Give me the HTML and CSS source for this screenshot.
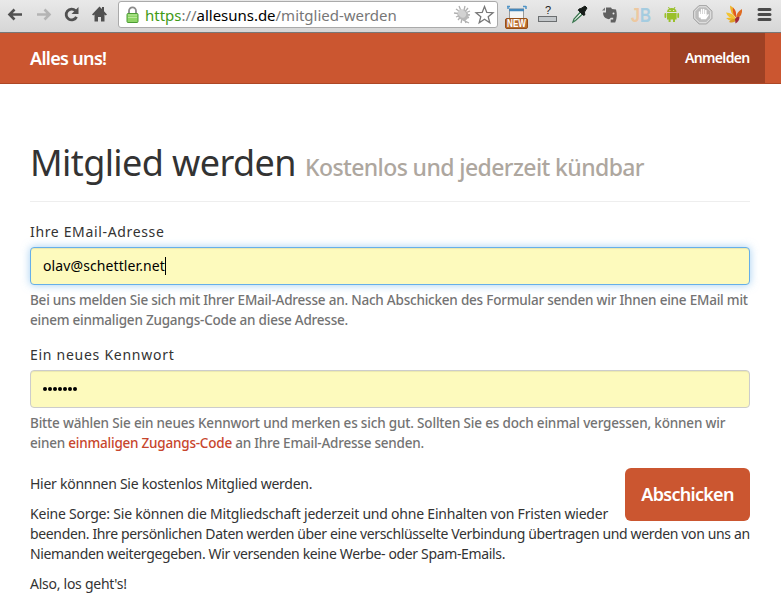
FILE: index.html
```html
<!DOCTYPE html>
<html lang="de">
<head>
<meta charset="utf-8">
<title>Mitglied werden</title>
<link rel="stylesheet" href="styles.css">
</head>
<body>
<div class="toolbar">
  <svg class="nav-icons" width="118" height="32" viewBox="0 0 118 32">
    <path d="M22 14.500H10M14.500 9.500l-5 5 5 5" fill="none" stroke="#505050" stroke-width="2.600"/>
    <path d="M37 14.500h12M44.500 9.500l5 5-5 5" fill="none" stroke="#b4b4b4" stroke-width="2.600"/>
    <path d="M75.500 10.800a5.400 5.400 0 1 0 1 6" fill="none" stroke="#505050" stroke-width="2.800"/>
    <path d="M78.500 7v7h-7z" fill="#505050"/>
    <path d="M99.500 6.500l-7.500 8 1.200 1 1.300-1v7h3.500v-4.500h3v4.500h3.500v-7l1.300 1 1.200-1-3-3.200V7h-2v2z" fill="#505050"/>
  </svg>
  <div class="address">
    <svg width="13" height="18" viewBox="0 0 13 18">
      <path d="M3 8V4.800a3.500 3.500 0 0 1 7 0V8" fill="none" stroke="#8b8b8b" stroke-width="1.800"/>
      <rect x="1" y="7.500" width="11" height="9" rx="1" fill="#8fd566" stroke="#4b9c34"/>
      <path d="M2 9h9M2 11.500h9" stroke="#b9ea9b"/>
    </svg>
    <span class="url"><span class="scheme">https</span>://<span class="host">allesuns.de</span>/mitglied-werden</span>
    <svg class="address-actions" width="42" height="22" viewBox="0 0 42 22">
      <g fill="none" stroke="#b0b0b0" stroke-width="1.300"><path d="M3 5l13 9M6 2l7 17M12 2L8 19M17 7L3 13M1 9l16 2M15 4L5 16M10 16l6 3"/></g>
      <ellipse cx="10" cy="11" rx="6" ry="5" fill="#b8b8b8" transform="rotate(40 10 11)"/>
      <ellipse cx="9" cy="9.500" rx="4.500" ry="3.500" fill="#d2d2d2" transform="rotate(40 9 9.500)"/>
      <path d="M31.500 2.500l2.300 5.900 6.200.3-4.800 4 1.600 6.100-5.300-3.500-5.300 3.500 1.600-6.100-4.800-4 6.200-.3z" fill="#fff" stroke="#777" stroke-width="1.300"/>
    </svg>
  </div>
  <svg class="extensions" width="283" height="32" viewBox="0 0 283 32">
    <path d="M10 6v3M9 6.500h3M28 6.500h-3M28 6v3" fill="none" stroke="#4f94c6" stroke-width="1.500"/>
    <rect x="11.500" y="9" width="14" height="13" fill="#f5f5f5" stroke="#999"/>
    <path d="M11 10h15" stroke="#4488bd" stroke-width="2.500"/>
    <rect x="7.500" y="18.500" width="22" height="10" rx="1.500" fill="#b96b2c" stroke="#965019"/>
    <text class="badge-new" x="18.500" y="27.300" text-anchor="middle" textLength="19" lengthAdjust="spacingAndGlyphs">NEW</text>
    <text class="question" x="50" y="13.500" text-anchor="middle">?</text>
    <rect x="40.500" y="16.500" width="18" height="5" fill="#c3c7ca" stroke="#6b6e70"/>
    <path d="M75 22l1-3 6.500-7 2 2-7 6.500z" fill="#fff" stroke="#39764e" stroke-width="1.300"/>
    <path d="M81 9l2-.5 4-2.500 2 2-2.500 4 .3 3-1.500.3-5-5z" fill="#171c19" stroke="#171c19"/>
    <path d="M108 7.500h5l1 1.500 4 .4q2 7-.8 13h-4.500v-2.800h2.500v-1.800h-2.500q-1 2-3.500 1-4-1-4.200-6.300h3z" fill="#606060"/>
    <path d="M107 7.500v3h-3z" fill="#747474"/>
    <circle cx="115.500" cy="13.500" r="1" fill="#eee"/>
    <text class="jb" x="133" y="22" textLength="9" lengthAdjust="spacingAndGlyphs" fill="#edc8a0">J</text>
    <text class="jb" x="142" y="22" textLength="11" lengthAdjust="spacingAndGlyphs" fill="#a5cce0">B</text>
    <g fill="#9ac02b">
      <path d="M169 12a4.800 4 0 0 1 9.600 0z"/>
      <path d="M169 13h9.600v6.500h-1.600v2.500h-2v-2.500h-2.400v2.500h-2v-2.500H169z"/>
      <rect x="166.500" y="13" width="1.800" height="5" rx=".9"/><rect x="179.300" y="13" width="1.800" height="5" rx=".9"/>
      <path d="M170.500 7l1 2M177 7l-1 2" stroke="#9ac02b"/>
    </g>
    <circle cx="172" cy="10.500" r=".6" fill="#fff"/><circle cx="175.700" cy="10.500" r=".6" fill="#fff"/>
    <path d="M201 5.500h7.500l5.500 5.500v7.500l-5.500 5.500H201l-5.500-5.500V11z" fill="#bdbdbd" stroke="#aaa"/>
    <path d="M201.400 6.800h6.700l4.600 4.600v6.700l-4.600 4.600h-6.700l-4.600-4.600v-6.700z" fill="none" stroke="#e5e5e5"/>
    <path d="M201.500 17v-5M203.600 14V9.500M205.700 14V9.500M207.800 15v-4.500" stroke="#fff" stroke-width="1.500" stroke-linecap="round"/>
    <path d="M200.800 14h7.700v2l1.500-2 1 .8-3 4.500h-5z" fill="#fff"/>
    <path d="M232 5.500q7 3 6 12-6-4-6-12z" fill="#eeb32c"/>
    <path d="M235 7.500q4 4 3 10-4-4-3-10z" fill="#e25720"/>
    <path d="M244 9q1 7-5.500 9.500-1-6 5.500-9.500z" fill="#df6b22"/>
    <path d="M228 12.500q7 0 10 6.500-8 0-10-6.500z" fill="#f2c433"/>
    <path d="M228 18q5-1 10 1-4 4.500-10-1z" fill="#efb928"/>
    <path d="M231 22q3-4 8-3-3 5-8 3z" fill="#dc9d24"/>
    <path d="M237 19q2-3 4.500-2 0 4-4 6.500z" fill="#a42a38"/>
    <path d="M261 9.500h11M261 14.500h11M261 19.500h11" stroke="#4b4b4b" stroke-width="3" stroke-linecap="round"/>
  </svg>
</div>
<header class="navbar">
  <a class="brand">Alles uns!</a>
  <a class="login">Anmelden</a>
</header>
<main>
  <h1><span class="title">Mitglied werden</span><small>Kostenlos und jederzeit kündbar</small></h1>
  <form>
    <label class="label-email">Ihre EMail-Adresse</label>
    <div class="field focused"><span class="value">olav@schettler.net</span><span class="caret"></span></div>
    <p class="help"><span class="h1a">Bei uns melden Sie sich mit Ihrer EMail-Adresse an. Nach Abschicken des Formular senden wir Ihnen eine EMail mit</span><br><span class="h1b">einem einmaligen Zugangs-Code an diese Adresse.</span></p>
    <label class="label-password">Ein neues Kennwort</label>
    <div class="field"><span class="dots"><i></i><i></i><i></i><i></i><i></i><i></i><i></i></span></div>
    <p class="help"><span class="h2a">Bitte wählen Sie ein neues Kennwort und merken es sich gut. Sollten Sie es doch einmal vergessen, können wir</span><br><span class="h2b">einen <a>einmaligen Zugangs-Code</a> an Ihre Email-Adresse senden.</span></p>
    <div class="info">
      <a class="submit">Abschicken</a>
      <p class="p1">Hier könnnen Sie kostenlos Mitglied werden.</p>
      <p><span class="p2a">Keine Sorge: Sie können die Mitgliedschaft jederzeit und ohne Einhalten von Fristen wieder</span><br><span class="p2b">beenden. Ihre persönlichen Daten werden über eine verschlüsselte Verbindung übertragen und werden von uns an</span><br><span class="p2c">Niemanden weitergegeben. Wir versenden keine Werbe- oder Spam-Emails.</span></p>
      <p class="p3">Also, los geht's!</p>
    </div>
  </form>
</main>
</body>
</html>
```
FILE: styles.css
```css
* { box-sizing: border-box; }
body { margin: 0; height: 602px; overflow: hidden; background: #fff; color: #333; font: 14px/20px "Noto Sans", sans-serif; }
.toolbar { display: flex; height: 33px; background: linear-gradient(#e9e9e9, #d6d6d6); border-bottom: 1px solid #777; }
.nav-icons, .extensions { flex: none; }
.address { display: flex; align-items: center; width: 380px; height: 27px; margin-top: 1px; padding: 0 2px 0 7px; background: #fff; border: 1px solid #aaa; border-radius: 3px; }
.url { flex: 1; margin-left: 6px; font-size: 15px; letter-spacing: -.02px; color: #777; white-space: nowrap; }
.scheme { color: #3f9a16; }
.host { color: #000; }
.badge-new { font: bold 10px "Liberation Sans", sans-serif; fill: #fff; }
.question { font: 11px "Liberation Sans", sans-serif; fill: #222; }
.jb { font: bold 21px "Liberation Sans", sans-serif; }
.navbar { display: flex; justify-content: space-between; height: 51px; padding: 0 16px 0 30px; background: #cb5630; border-bottom: 1px solid #ad4726; color: #fff; font-weight: 600; line-height: 50px; }
.brand { font-size: 18px; letter-spacing: -.68px; }
.login { width: 95px; padding-left: 15px; background: #9f4124; letter-spacing: -.65px; }
main { padding: 0 31px 0 30px; }
h1 { display: flex; align-items: baseline; height: 118px; margin: 0 0 20px; padding-top: 54px; border-bottom: 1px solid #eee; font-weight: 400; line-height: 50px; white-space: nowrap; }
.title { width: 275px; font-size: 36px; letter-spacing: -.6px; }
small { color: #aea79f; font-size: 23px; font-weight: 500; letter-spacing: -.6px; }
label { display: block; height: 25px; }
.label-email { letter-spacing: .65px; }
.label-password { letter-spacing: .73px; }
.field { display: flex; align-items: center; height: 38px; padding: 0 12px; background: #fdfabd; border: 1px solid #ccc; border-radius: 4px; color: #000; box-shadow: inset 0 1px 1px rgba(0,0,0,.075); }
.focused { border-color: #66afe9; box-shadow: inset 0 1px 1px rgba(0,0,0,.075), 0 0 8px rgba(102,175,233,.6); }
.value { letter-spacing: .1px; }
.caret { width: 1px; height: 18px; background: #000; }
.dots { display: flex; gap: 1px; margin-top: -1px; }
.dots i { width: 4px; height: 4px; border-radius: 50%; background: #000; }
.help { height: 40px; margin: 5px 0 15px; color: #737373; font-size: 13.5px; font-weight: 500; white-space: nowrap; }
.help a { color: #c7452c; }
.h1a { letter-spacing: -.215px; }
.h1b { letter-spacing: -.22px; }
.h2a { letter-spacing: -.175px; }
.h2b { letter-spacing: -.22px; }
.info { white-space: nowrap; }
.info p { margin: 0 0 10px; }
.info .p1 { padding-top: 6px; }
.submit { float: right; width: 125px; height: 53px; border-radius: 6px; background: #cb5630; color: #fff; font-size: 18px; font-weight: 600; letter-spacing: -.7px; line-height: 52px; text-align: center; }
.p1, .p3 { letter-spacing: -.265px; }
.p2a { letter-spacing: -.215px; }
.p2b { letter-spacing: -.355px; }
.p2c { letter-spacing: -.345px; }
```
